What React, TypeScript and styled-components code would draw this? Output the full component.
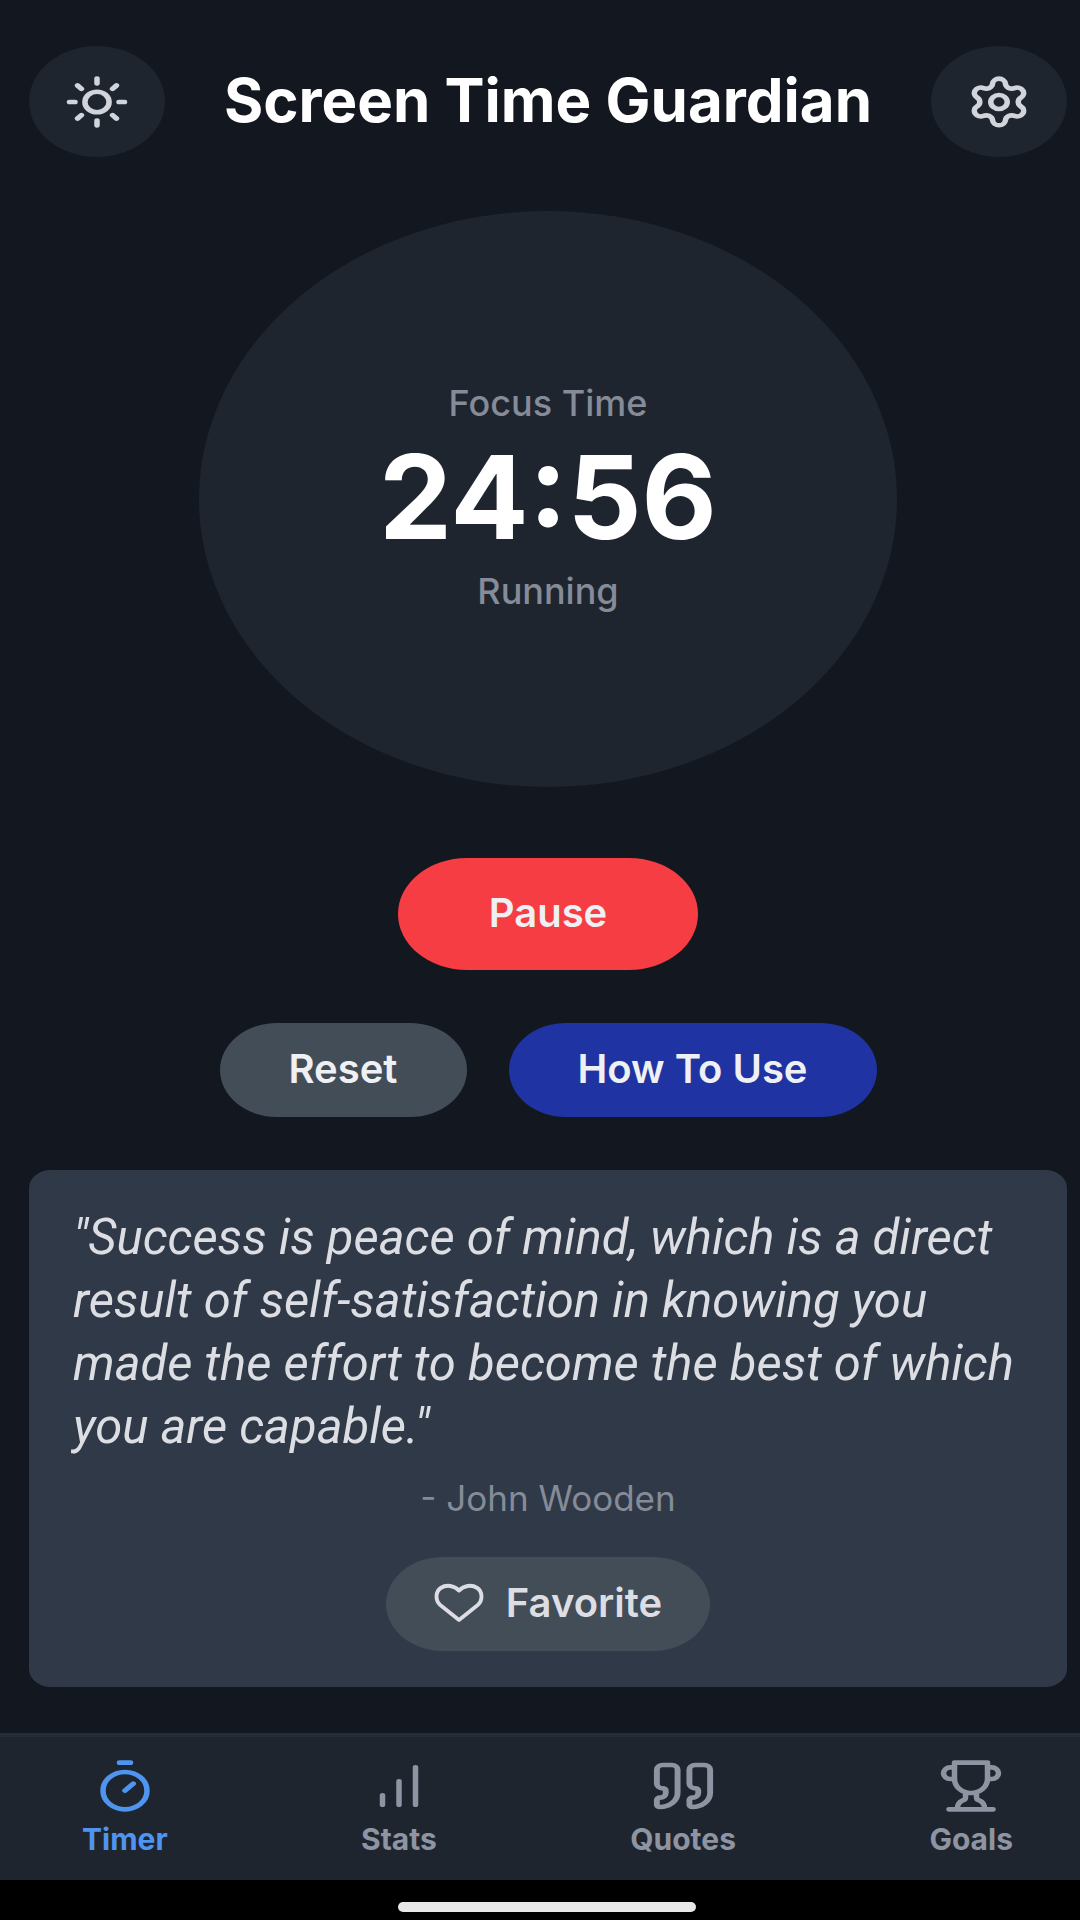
import React from "react";
import styled, { createGlobalStyle } from "styled-components";

const GlobalStyle = createGlobalStyle`
  *, *::before, *::after { box-sizing: border-box; }
  body { margin: 0; background: #131720; }
  button { border: 0; padding: 0; font: inherit; color: inherit; cursor: pointer; }
`;

const Screen = styled.div`
  display: flex;
  flex-direction: column;
  min-height: 100vh;
  background: #131720;
  color: #ffffff;
  font-family: Inter, Roboto, sans-serif;
`;

const Main = styled.main`
  display: flex;
  flex: 1;
  flex-direction: column;
  align-items: center;
  padding: 46px 13px 46px 29px;
`;

const Header = styled.header`
  display: flex;
  align-items: center;
  justify-content: space-between;
  width: 100%;
  margin-bottom: 54px;
`;

const Title = styled.h1`
  margin: 0;
  padding-bottom: 4px;
  font-size: 60px;
  line-height: 64px;
  font-weight: 700;
`;

const IconButton = styled.button`
  display: flex;
  align-items: center;
  justify-content: center;
  width: 136px;
  height: 111px;
  border-radius: 50%;
  background: #1e252f;
  color: #d1d5db;
`;

const Icon = styled.svg<{ $w: number; $h: number; $stroke: number }>`
  display: block;
  width: ${(p) => p.$w}px;
  height: ${(p) => p.$h}px;
  fill: none;
  stroke: currentColor;
  stroke-width: ${(p) => p.$stroke};
  stroke-linecap: round;
  stroke-linejoin: round;
`;

const Dial = styled.section`
  display: flex;
  flex-direction: column;
  align-items: center;
  justify-content: center;
  width: 698px;
  max-width: 100%;
  height: 576px;
  margin-bottom: 71px;
  padding-bottom: 4px;
  border-radius: 50%;
  background: #1e252f;
`;

const DialLabel = styled.p`
  margin: 0;
  font-size: 36px;
  line-height: 48px;
  font-weight: 500;
  color: #858b98;
`;

const Clock = styled.time`
  font-size: 116px;
  line-height: 140px;
  font-weight: 700;
`;

const Row = styled.div`
  display: flex;
  justify-content: center;
  gap: 42px;
  margin: 53px 0;
`;

const Pill = styled.button<{ $bg: string; $w: number; $large?: boolean; $muted?: boolean }>`
  display: flex;
  align-items: center;
  justify-content: center;
  gap: 22px;
  width: ${(p) => p.$w}px;
  height: ${(p) => (p.$large ? 112 : 94)}px;
  padding-bottom: 2px;
  border-radius: ${(p) => (p.$large ? "69px / 56px" : "57px / 47px")};
  background: ${(p) => p.$bg};
  color: ${(p) => (p.$muted ? "#dcdee3" : "#eef0f4")};
  font-size: 40px;
  line-height: 48px;
  font-weight: 600;
`;

const Card = styled.section`
  display: flex;
  flex-direction: column;
  align-items: center;
  width: 100%;
  padding: 36px 44px;
  border-radius: 22px / 18px;
  background: #303947;
`;

const Quote = styled.blockquote`
  align-self: stretch;
  margin: 0 0 16px;
  font-family: Roboto, Inter, sans-serif;
  font-size: 49px;
  line-height: 63px;
  font-style: italic;
  font-weight: 400;
  color: #dcdee3;
`;

const Author = styled.p`
  margin: 0 0 35px;
  font-size: 35px;
  line-height: 48px;
  color: #858b98;
`;

const TabBar = styled.nav`
  display: flex;
  justify-content: space-between;
  height: 147px;
  padding: 21px 67px 0 82px;
  border-top: 4px solid #232c37;
  background: #1e252f;
`;

const Tab = styled.button<{ $active?: boolean }>`
  display: flex;
  flex-direction: column;
  align-items: center;
  gap: 7px;
  height: 99px;
  background: none;
  color: ${(p) => (p.$active ? "#4f95f0" : "#8e94a1")};
  font-size: 30px;
  line-height: 36px;
  font-weight: 700;
`;

const SystemBar = styled.footer`
  display: flex;
  justify-content: center;
  align-items: center;
  height: 40px;
  padding: 14px 0 0 14px;
  background: #000000;
`;

const HomeIndicator = styled.div`
  width: 298px;
  height: 10px;
  border-radius: 5px;
  background: #e8e8e8;
`;

type GlyphProps = { w?: number; h?: number; box?: string; stroke?: number; children: React.ReactNode };

const Glyph = ({ w = 66, h = 56, box = "0 0 24 24", stroke = 2, children }: GlyphProps) => (
  <Icon $w={w} $h={h} $stroke={stroke} viewBox={box} preserveAspectRatio="none" aria-hidden="true">
    {children}
  </Icon>
);

const SunIcon = () => (
  <Glyph>
    <circle cx="12" cy="12" r="4.400" />
    <path d="M12 2v2M12 20v2M4.930 4.930l1.410 1.410M17.660 17.660l1.410 1.410M2 12h2M20 12h2M6.340 17.660l-1.410 1.410M19.070 4.930l-1.410 1.410" />
  </Glyph>
);

const GearIcon = () => (
  <Glyph>
    <path d="M9.671 4.136a2.340 2.340 0 0 1 4.659 0 2.340 2.340 0 0 0 3.319 1.915 2.340 2.340 0 0 1 2.330 4.033 2.340 2.340 0 0 0 0 3.831 2.340 2.340 0 0 1-2.330 4.033 2.340 2.340 0 0 0-3.319 1.915 2.340 2.340 0 0 1-4.659 0 2.340 2.340 0 0 0-3.320-1.915 2.340 2.340 0 0 1-2.330-4.033 2.340 2.340 0 0 0 0-3.831A2.340 2.340 0 0 1 6.350 6.051a2.340 2.340 0 0 0 3.319-1.915" />
    <circle cx="12" cy="12" r="3" />
  </Glyph>
);

const HeartIcon = () => (
  <Glyph w={50} h={40} box="0 0 52 40" stroke={4}>
    <path d="M26 37 6.500 22C1 17.500 1.500 8.500 7 5 13 1.300 21 2.500 26 7.500 31 2.500 39 1.300 45 5c5.500 3.500 6 12.500.5 17z" />
  </Glyph>
);

const TimerIcon = () => (
  <Glyph>
    <path d="M10 2h4M12 14l3-3" />
    <circle cx="12" cy="14" r="8" />
  </Glyph>
);

const StatsIcon = () => (
  <Glyph>
    <path d="M6 20v-4M12 20V10M18 20V4" />
  </Glyph>
);

const QuotesIcon = () => (
  <Glyph w={71}>
    <path d="M16 3a2 2 0 0 0-2 2v6a2 2 0 0 0 2 2 1 1 0 0 1 1 1v1a2 2 0 0 1-2 2 1 1 0 0 0-1 1v2a1 1 0 0 0 1 1 6 6 0 0 0 6-6V5a2 2 0 0 0-2-2z" />
    <path d="M5 3a2 2 0 0 0-2 2v6a2 2 0 0 0 2 2 1 1 0 0 1 1 1v1a2 2 0 0 1-2 2 1 1 0 0 0-1 1v2a1 1 0 0 0 1 1 6 6 0 0 0 6-6V5a2 2 0 0 0-2-2z" />
  </Glyph>
);

const TrophyIcon = () => (
  <Glyph>
    <path d="M6 9H4.500a2.500 2.500 0 0 1 0-5H6M18 9h1.500a2.500 2.500 0 0 0 0-5H18M4 22h16M10 14.660V17c0 .55-.47.98-.97 1.210C7.850 18.750 7 20.240 7 22M14 14.660V17c0 .55.47.98.97 1.210C16.150 18.750 17 20.240 17 22M18 2H6v7a6 6 0 0 0 12 0z" />
  </Glyph>
);

const tabs = [
  { label: "Timer", Mark: TimerIcon },
  { label: "Stats", Mark: StatsIcon },
  { label: "Quotes", Mark: QuotesIcon },
  { label: "Goals", Mark: TrophyIcon },
];

export default function App() {
  return (
    <Screen>
      <GlobalStyle />
      <Main>
        <Header>
          <IconButton aria-label="Toggle theme"><SunIcon /></IconButton>
          <Title>Screen Time Guardian</Title>
          <IconButton aria-label="Settings"><GearIcon /></IconButton>
        </Header>
        <Dial>
          <DialLabel>Focus Time</DialLabel>
          <Clock>24:56</Clock>
          <DialLabel>Running</DialLabel>
        </Dial>
        <Pill $bg="#f53d43" $w={300} $large>Pause</Pill>
        <Row>
          <Pill $bg="#434d58" $w={247}>Reset</Pill>
          <Pill $bg="#2033a2" $w={368}>How To Use</Pill>
        </Row>
        <Card>
          <Quote>
            "Success is peace of mind, which is a direct result of self-satisfaction in knowing you made the effort to
            become the best of which you are capable."
          </Quote>
          <Author>- John Wooden</Author>
          <Pill $bg="#434d58" $w={324} $muted>
            <HeartIcon />
            Favorite
          </Pill>
        </Card>
      </Main>
      <TabBar aria-label="Main">
        {tabs.map(({ label, Mark }, i) => (
          <Tab key={label} $active={i === 0} aria-current={i === 0 ? "page" : undefined}>
            <Mark />
            {label}
          </Tab>
        ))}
      </TabBar>
      <SystemBar>
        <HomeIndicator />
      </SystemBar>
    </Screen>
  );
}
